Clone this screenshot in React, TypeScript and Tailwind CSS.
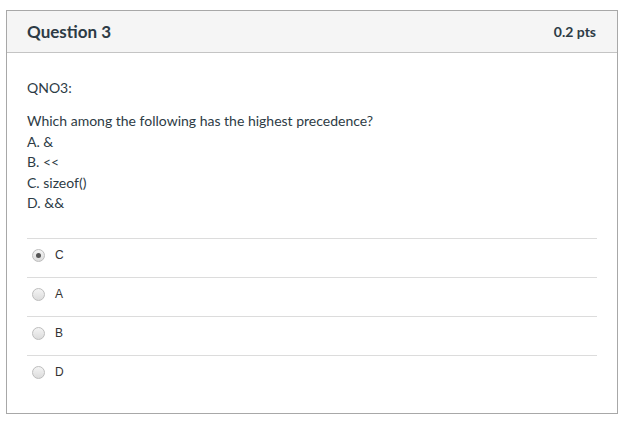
import React from "react";

const answers = [
  { label: "C", checked: true },
  { label: "A", checked: false },
  { label: "B", checked: false },
  { label: "D", checked: false },
];

const Radio = ({ checked }: { checked: boolean }) => (
  <span className="flex h-[13px] w-[13px] items-center justify-center rounded-full border border-[#bdbdbd] bg-gradient-to-b from-[#f4f4f4] to-[#dcdcdc]">
    {checked && <span className="h-[5px] w-[5px] rounded-full bg-[#555]" />}
  </span>
);

const App = () => {
  return (
    <div className="h-[421px] w-[625px] bg-white pl-[6px] pr-[7px] pt-[10px] font-['Lato','Open_Sans',sans-serif] text-[#2d3b45]">
      <div className="h-[404px] border border-[#a8a8a8]">
        <div className="flex h-[42px] items-center justify-between border-b border-[#c4c4c4] bg-[#f5f5f5] pl-[20px] pr-[21px]">
          <h2 className="text-[17px] font-bold text-[#2d3b45]">Question 3</h2>
          <span className="text-[14px] font-bold text-[#2d3b45]">0.2 pts</span>
        </div>
        <div className="px-[20px] pt-[25px]">
          <p className="text-[14px] leading-[20px]">QNO3:</p>
          <div className="mt-[13px] text-[14px] leading-[20.5px]">
            <p>Which among the following has the highest precedence?</p>
            <p>A. &amp;</p>
            <p>B. &lt;&lt;</p>
            <p>C. sizeof()</p>
            <p>D. &amp;&amp;</p>
          </div>
          <div className="mt-[24px]">
            {answers.map((a) => (
              <div
                key={a.label}
                className="flex h-[39px] items-start gap-[10px] border-t border-[#dcdcdc] pl-[5px] pt-[10px]"
              >
                <Radio checked={a.checked} />
                <span className="font-['Liberation_Sans',Arial,sans-serif] text-[12px] leading-[13px] text-[#333]">
                  {a.label}
                </span>
              </div>
            ))}
          </div>
        </div>
      </div>
    </div>
  );
};

export default App;
